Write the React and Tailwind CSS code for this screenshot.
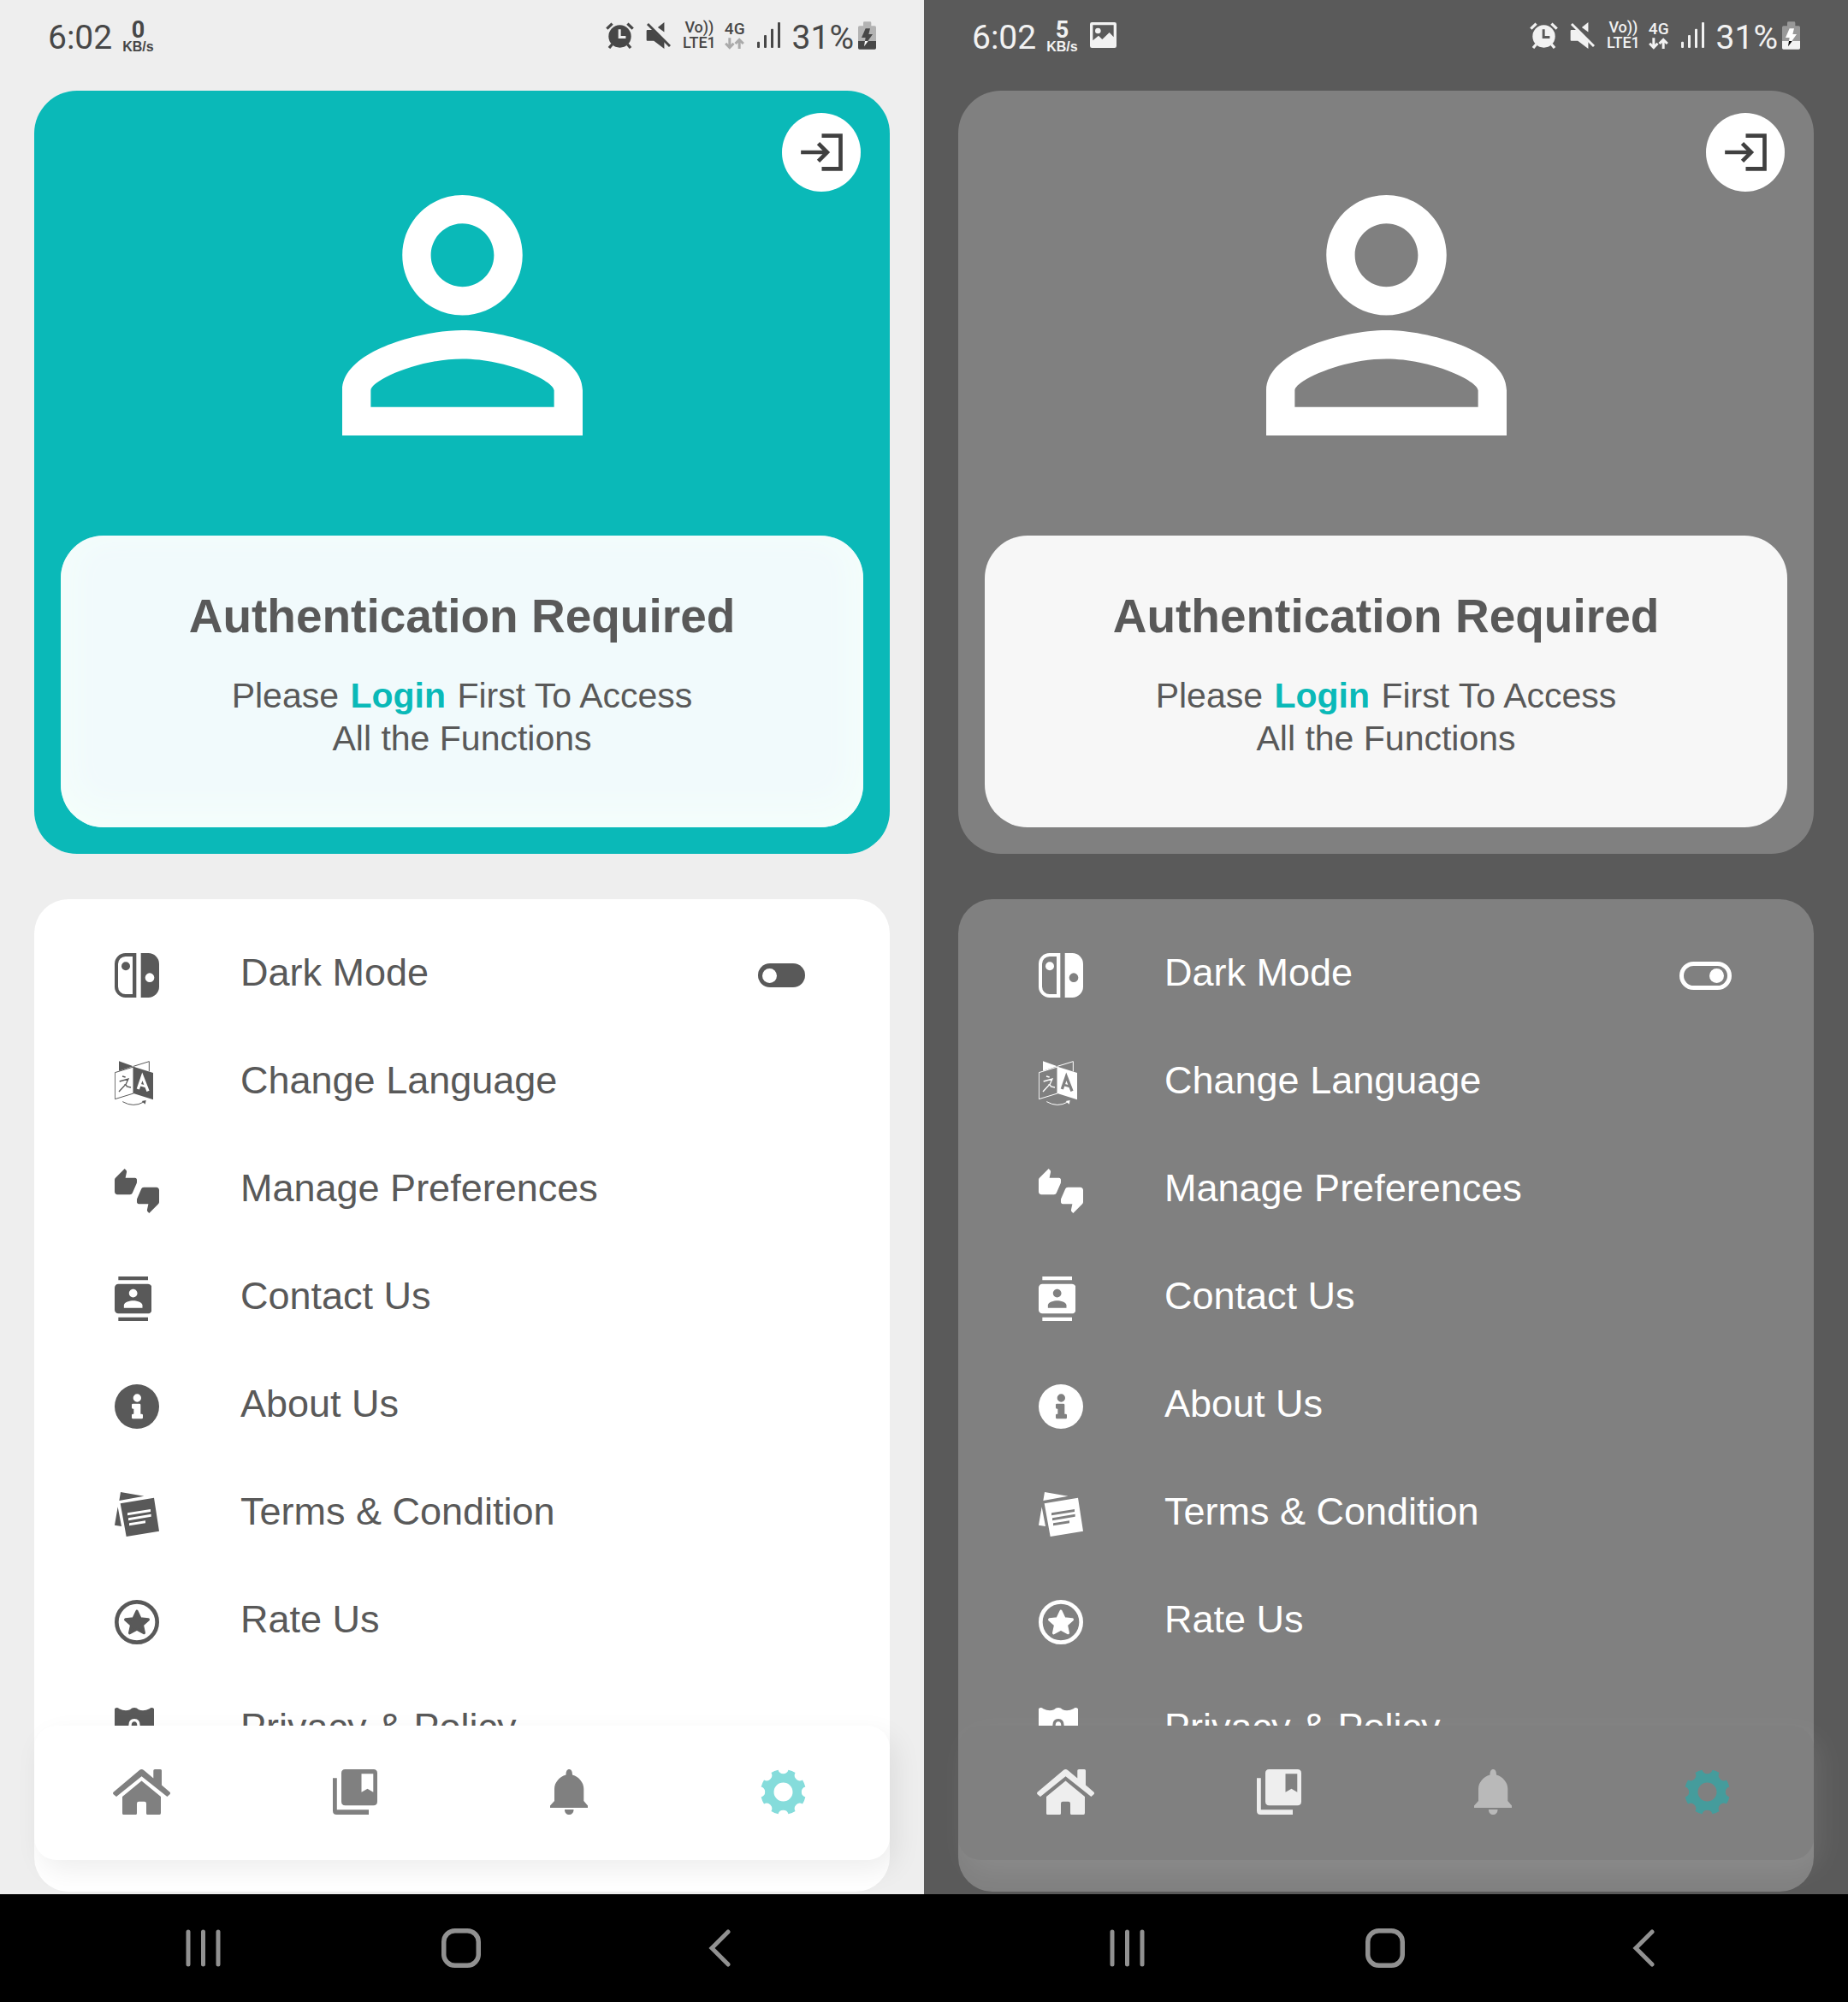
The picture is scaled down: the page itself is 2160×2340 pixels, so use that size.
import React from "react";

const LIGHT = {
  id: "light",
  dark: false,
  speed: "0",
  page: "bg-[#eeeeee]",
  status: "text-[#474747]",
  arrows: "text-[#aaaaaa]",
  page_hex: "#eeeeee",
  batteryBody: "#b3b3b3",
  batteryBolt: "#474747",
  batteryBoltLow: "#ffffff",
  hero: "bg-[#0ab9b8]",
  notice:
    "bg-[#f1fafc] shadow-[inset_0_-12px_36px_12px_#f4fefb]",
  menu: "bg-white text-[#595959]",
  nav: "bg-white shadow-[8px_12px_32px_rgba(0,0,0,0.07)]",
  navIcon: "text-[#808080]",
  bell: "text-[#808080]",
  gear: "text-[#85dcdb]",
};

const DARK = {
  id: "dark",
  dark: true,
  speed: "5",
  page: "bg-[#5a5a5a]",
  status: "text-[#f2f2f2]",
  arrows: "text-[#f2f2f2]",
  page_hex: "#5a5a5a",
  batteryBody: "#989898",
  batteryBolt: "#ffffff",
  batteryBoltLow: "#000000",
  hero: "bg-[#808080]",
  notice: "bg-[#f7f7f7]",
  menu: "bg-[#808080] text-white",
  nav: "bg-[#808080] shadow-[8px_12px_32px_rgba(255,255,255,0.09)]",
  navIcon: "text-[#eeeeee]",
  bell: "text-[#b9b9b9]",
  gear: "text-[#459c9c]",
};

/* ---------- status bar ---------- */

function AlarmIcon({ hand }) {
  return (
    <svg viewBox="0 0 98 94" className="h-[31px] w-[33px]" fill="none" stroke="currentColor" strokeWidth="10">
      <path d="M3 23 22 5M76 5l19 18M22 78 11 91M76 78l11 13" />
      <circle cx="49" cy="50" r="40" fill="currentColor" stroke="none" />
      <path d="M48 25v28h22" stroke={hand} strokeWidth="9" />
    </svg>
  );
}

function MuteIcon() {
  return (
    <svg viewBox="0 0 88 94" className="h-[31px] w-[29px]" fill="currentColor">
      <path d="M5 27h18l42 42v25L28 66H5q-3 0-3-3V30q0-3 3-3ZM65 0v35L42 18Z" />
      <path d="m6 6 79 79" stroke="currentColor" strokeWidth="9" />
    </svg>
  );
}

function DataArrows() {
  return (
    <svg viewBox="0 0 68 42" className="h-[14px] w-[23px]" fill="none" stroke="currentColor" strokeWidth="9">
      <path d="M17 1v32M3 20l14 15 14-15M51 39V7M37 21 51 7l14 14" />
    </svg>
  );
}

function SignalIcon() {
  return (
    <svg viewBox="0 0 81 90" className="h-[30px] w-[27px]" fill="currentColor">
      <rect x="0" y="68" width="9" height="22" rx="3" />
      <rect x="24" y="45" width="9" height="45" rx="3" />
      <rect x="48" y="23" width="9" height="67" rx="3" />
      <rect x="72" y="0" width="9" height="90" rx="3" />
    </svg>
  );
}

function BatteryIcon({ theme }) {
  return (
    <svg viewBox="0 0 63 97" className="h-[33px] w-[21px]">
      <path d="M18 15V4q0-4 4-4h20q4 0 4 4v11h12q5 0 5 5v50H0V20q0-5 5-5Z" fill={theme.batteryBody} />
      <path d="M0 68h63v24q0 5-5 5H5q-5 0-5-5Z" fill="currentColor" />
      <path d="M26 24h16l-5 20h14L34 68H24l2-12H12Z" fill={theme.batteryBolt} />
      <path d="M24 68h11L21 87Z" fill={theme.batteryBoltLow} />
    </svg>
  );
}

function PictureIcon() {
  return (
    <svg viewBox="0 0 93 90" className="h-[30px] w-[31px]" fill="currentColor" fillRule="evenodd">
      <path d="M7 0h79q7 0 7 7v76q0 7-7 7H7q-7 0-7-7V7q0-7 7-7Zm3 10v54l20-17 13 13 25-24 15 16V10Z" />
      <circle cx="28" cy="30" r="10" />
    </svg>
  );
}

function StatusBar({ theme }) {
  return (
    <header className={`flex h-[106px] items-start justify-between px-14 pt-[21px] ${theme.status}`}>
      <div className="flex h-10 items-center">
        <span className="pt-1.5 font-[Roboto,sans-serif] text-[39px] leading-10">6:02</span>
        <div className="ml-3 flex flex-col items-center pt-1 font-bold">
          <span className="font-[Roboto,sans-serif] text-[27px] leading-6">{theme.speed}</span>
          <span className="text-[16px] leading-4">KB/s</span>
        </div>
        {theme.dark && (
          <span className="ml-3.5">
            <PictureIcon />
          </span>
        )}
      </div>
      <div className="flex h-10 items-center font-[Roboto,sans-serif]">
        <AlarmIcon hand={theme.page_hex} />
        <span className="ml-3.5">
          <MuteIcon />
        </span>
        <div className="ml-3.5 flex flex-col items-center text-[18px] font-medium leading-[18px]">
          <span>Vo))</span>
          <span>LTE1</span>
        </div>
        <div className="ml-2.5 flex flex-col items-center text-[19px] font-medium leading-5">
          <span>4G</span>
          <span className={theme.arrows}>
            <DataArrows />
          </span>
        </div>
        <span className="ml-3.5">
          <SignalIcon />
        </span>
        <span className="ml-3.5 mr-[5px] pt-1.5 text-[39px] leading-10">31%</span>
        <BatteryIcon theme={theme} />
      </div>
    </header>
  );
}

/* ---------- hero card ---------- */

function Hero({ theme }) {
  return (
    <section className={`rounded-[50px] px-[31px] pb-[31px] pt-[26px] ${theme.hero}`}>
      <div className="flex justify-end">
        <button
          type="button"
          aria-label="Log in"
          className="mr-[3px] flex size-[92px] items-center justify-center rounded-full bg-white text-[#404040]"
        >
          <svg viewBox="0 0 146 132" className="h-11 w-[49px]" fill="none" stroke="currentColor" strokeWidth="14">
            <path d="M73 8h66v116H73M0 66h92" />
            <path d="m61 35 31 31-31 31" />
          </svg>
        </button>
      </div>
      <svg viewBox="4 4 16 16" className="mx-auto mt-1 size-[281px] text-white" fill="currentColor">
        <path d="M12 5.9c1.16 0 2.1.94 2.1 2.1s-.94 2.1-2.1 2.1S9.9 9.16 9.9 8s.94-2.1 2.1-2.1m0 9c2.97 0 6.1 1.46 6.1 2.1v1.1H5.9V17c0-.64 3.13-2.1 6.1-2.1M12 4C9.79 4 8 5.79 8 8s1.79 4 4 4 4-1.79 4-4-1.79-4-4-4zm0 9c-2.67 0-8 1.34-8 4v3h16v-3c0-2.66-5.33-4-8-4z" />
      </svg>
      <div className={`mt-[117px] rounded-[50px] px-8 pb-[79px] pt-[62px] text-center text-[#595959] ${theme.notice}`}>
        <h1 className="text-[55px] font-bold leading-[64px]">Authentication Required</h1>
        <p className="mt-9 text-[41px] leading-[50px]">
          Please{" "}
          <a href="#login" className="mx-0.5 font-bold text-[#0ab9b8]">
            Login
          </a>{" "}
          First To Access
          <br />
          All the Functions
        </p>
      </div>
    </section>
  );
}

/* ---------- menu icons ---------- */

const ICON = "h-[52px] w-auto";

const SwitchIcon = () => (
  <svg viewBox="0 0 156 156" className={ICON} fill="currentColor" fillRule="evenodd">
    <path d="M38 0h38v156H38A38 38 0 0 1 0 118V38A38 38 0 0 1 38 0Zm0 12a26 26 0 0 0-26 26v80a26 26 0 0 0 26 26h25V12Z" />
    <circle cx="39" cy="46" r="15" />
    <path d="M92 0h26a38 38 0 0 1 38 38v80a38 38 0 0 1-38 38H92Zm31 70a16 16 0 1 0 0 32 16 16 0 0 0 0-32Z" />
  </svg>
);

const LanguageIcon = ({ letter }) => (
  <svg viewBox="0 0 135 156" className={ICON} fill="none" stroke="currentColor" strokeWidth="3">
    <path d="M15 1 65 19 15 35Z" fill="currentColor" stroke="none" />
    <path d="m66 19 55-17v35M1 41l65-20v93L1 134Z" />
    <path d="m66 20 69 22v94l-69-22Z" fill="currentColor" stroke="none" />
    <polyline points="82,99 97,55 117,106" stroke={letter} strokeWidth="10" />
    <polyline points="86,83 110,90" stroke={letter} strokeWidth="8" />
    <path d="m27 54 11 3M17 72l31-9-8 18-25 27M34 84q7-2 9 6l14 3" strokeWidth="4" />
    <path d="M28 143q38 22 74 1" />
    <path d="m95 141 15-3-3 14Z" fill="currentColor" stroke="none" />
  </svg>
);

const ThumbsIcon = () => (
  <svg viewBox="0 0 24 24" className={ICON} fill="currentColor">
    <path d="M12 6c0-.55-.45-1-1-1H5.82l.66-3.18.02-.23c0-.31-.13-.59-.33-.8L5.38 0 .44 4.94C.17 5.21 0 5.59 0 6v6.5c0 .83.67 1.5 1.5 1.5h6.75c.62 0 1.15-.38 1.38-.91l2.26-5.29c.07-.17.11-.36.11-.55V6zm10.5 4h-6.75c-.62 0-1.15.38-1.38.91l-2.26 5.29c-.07.17-.11.36-.11.55V18c0 .55.45 1 1 1h5.18l-.66 3.18-.02.24c0 .31.13.59.33.8l.79.78 4.94-4.94c.27-.27.44-.65.44-1.06v-6.5c0-.83-.67-1.5-1.5-1.5z" />
  </svg>
);

const ContactIcon = () => (
  <svg viewBox="2 0 20 24" className={ICON} fill="currentColor">
    <path d="M20 0H4v2h16V0zM4 24h16v-2H4v2zM20 4H4c-1.1 0-2 .9-2 2v12c0 1.1.9 2 2 2h16c1.1 0 2-.9 2-2V6c0-1.1-.9-2-2-2zm-8 2.75c1.24 0 2.25 1.01 2.25 2.25s-1.01 2.25-2.25 2.25S9.75 10.24 9.75 9 10.76 6.75 12 6.75zM17 17H7v-1.5c0-1.67 3.33-2.5 5-2.5s5 .83 5 2.5V17z" />
  </svg>
);

const InfoIcon = () => (
  <svg viewBox="0 0 156 156" className={ICON} fill="currentColor" fillRule="evenodd">
    <path d="M78 0a78 78 0 1 0 0 156A78 78 0 0 0 78 0Zm1 34a14 14 0 1 1 0 28 14 14 0 0 1 0-28ZM64 68h23q4 0 4 4v32h4q4 0 4 4v9q0 4-4 4H64q-4 0-4-4v-9q0-4 4-4h3V86h-3q-4 0-4-4V72q0-4 4-4Z" />
  </svg>
);

const NotesIcon = () => (
  <svg viewBox="0 0 156 156" className={ICON} fill="currentColor" fillRule="evenodd">
    <path d="m21 0 82 14-87 16ZM11 52l13 68-24-4Z" />
    <path d="m20 40 118-20 18 117-115 19Zm25 33v9l81-13v-9Zm3 18v9l80-14v-9Zm3 18v9l57-9v-9Z" />
  </svg>
);

const StarIcon = () => (
  <svg viewBox="0 0 156 156" className={ICON} fill="none" stroke="currentColor">
    <circle cx="78" cy="78" r="71" strokeWidth="14" />
    <path
      d="m78 40 12 26 28 3-21 19 6 28-25-14-25 14 6-28-21-19 28-3Z"
      fill="currentColor"
      strokeWidth="10"
      strokeLinejoin="round"
    />
  </svg>
);

const ShieldIcon = () => (
  <svg viewBox="0 0 138 156" className={ICON} fill="currentColor" fillRule="evenodd">
    <path d="M0 4Q8-4 16 4q20 10 38 3 6-7 15-7t15 7q18 7 38-3 8-8 16 0v80q0 46-69 72Q0 130 0 84Zm69 35q-20 0-20 23v12h-6v38h52V74h-6V62q0-23-20-23Zm0 10q10 0 10 14v11H59V63q0-14 10-14Z" />
  </svg>
);

const LINKS = [
  { label: "Change Language", Icon: LanguageIcon },
  { label: "Manage Preferences", Icon: ThumbsIcon },
  { label: "Contact Us", Icon: ContactIcon },
  { label: "About Us", Icon: InfoIcon },
  { label: "Terms & Condition", Icon: NotesIcon },
  { label: "Rate Us", Icon: StarIcon },
  { label: "Privacy & Policy", Icon: ShieldIcon },
];

const ROW = "flex h-[126px] items-center pl-[94px] pr-24";
const ROW_ICON = "w-[147px] shrink-0";
const ROW_LABEL = "pb-1.5 text-[45px] leading-[52px]";

function Menu({ theme }) {
  const switchId = `${theme.id}-mode`;
  return (
    <ul className={`rounded-[40px] pb-[126px] pt-[26px] ${theme.menu}`}>
      <li className={ROW}>
        <span className={ROW_ICON}>
          <SwitchIcon />
        </span>
        <label htmlFor={switchId} className={ROW_LABEL}>
          Dark Mode
        </label>
        <span className="ml-auto flex w-[61px] justify-center">
          <input
            id={switchId}
            type="checkbox"
            role="switch"
            defaultChecked={theme.dark}
            className="flex h-7 w-[55px] appearance-none items-center rounded-full bg-[#595959] px-[5px] before:size-[17px] before:rounded-full before:bg-white before:content-[''] checked:h-[33px] checked:w-[61px] checked:justify-end checked:border-[5px] checked:border-white checked:bg-transparent checked:px-1"
          />
        </span>
      </li>
      {LINKS.map(({ label, Icon }) => (
        <li key={label}>
          <a href="#menu" className={ROW}>
            <span className={ROW_ICON}>
              <Icon letter={theme.dark ? "#808080" : "#ffffff"} />
            </span>
            <span className={ROW_LABEL}>{label}</span>
          </a>
        </li>
      ))}
    </ul>
  );
}

/* ---------- bottom navigation ---------- */

const polar = (angle, radius) => {
  const a = (angle * Math.PI) / 180;
  return `${(26.5 + radius * Math.cos(a)).toFixed(2)} ${(26.5 + radius * Math.sin(a)).toFixed(2)}`;
};

const GEAR_PATH =
  Array.from({ length: 8 }, (_, i) => {
    const a = i * 45;
    return `${i ? "" : `M${polar(13, 26.5)}`}A26.5 26.5 0 0 1 ${polar(a + 32, 26.5)}A6.2 6.2 0 0 0 ${polar(a + 58, 26.5)}`;
  }).join("") + "ZM26.5 15.5a11 11 0 1 0 0 22 11 11 0 0 0 0-22Z";

const HomeIcon = () => (
  <svg viewBox="0 0 67 53" className="h-[53px] w-[67px]" fill="currentColor">
    <path d="M31 1q2.500-2 5 0l11.300 9.500v-9Q47.300 0 49 0h6.500Q57 0 57 1.500v17l9.300 8q1.500 1.300.2 2.700L63.400 32 33.500 8.200 4 32 .6 29.200q-1.300-1.400.2-2.700Z" />
    <path d="M33.500 13.500 56 32v19q0 2-1.500 2h-14q-1.500 0-1.500-1.500V40q0-2.300-2.300-2.300h-6.400Q28 37.700 28 40v11.500q0 1.500-1.500 1.500h-14Q11 53 11 51.500V32Z" />
  </svg>
);

const LibraryIcon = () => (
  <svg viewBox="0 0 52 53" className="h-[53px] w-[52px]" fill="currentColor" fillRule="evenodd">
    <path d="M14.500 0h33Q52 0 52 4.500v33q0 4.800-4.500 4.800h-33Q10 42.300 10 37.500v-33Q10 0 14.500 0Zm19 5.300v21.400l7-4 6.800 4V5.300Z" />
    <path d="M0 10.300h4.800v37H42V53H4.500Q0 53 0 48.500Z" />
  </svg>
);

const BellIcon = () => (
  <svg viewBox="0 0 44 53" className="h-[53px] w-11" fill="currentColor">
    <path d="M22.200 0C24.500 0 26 2 26 6.500 34 9 39.300 15.500 39.300 23v14l4.700 5.500V45H0v-2.500L5 37V23C5 15.500 10.500 9 18.500 6.500 18.500 2 20 0 22.200 0ZM17 47h10.500c0 4-2.500 6-5.300 6S17 51 17 47Z" />
  </svg>
);

const GearIcon = () => (
  <svg viewBox="0 0 53 53" className="size-[53px]" fill="currentColor" fillRule="evenodd">
    <path d={GEAR_PATH} />
  </svg>
);

function BottomNav({ theme }) {
  const items = [
    { label: "Home", Icon: HomeIcon, tone: theme.navIcon },
    { label: "Library", Icon: LibraryIcon, tone: theme.navIcon },
    { label: "Notifications", Icon: BellIcon, tone: theme.bell },
    { label: "Settings", Icon: GearIcon, tone: theme.gear },
  ];
  return (
    <nav className={`absolute inset-x-0 bottom-[37px] grid h-[157px] grid-cols-4 rounded-[26px] pb-0.5 ${theme.nav}`}>
      {items.map(({ label, Icon, tone }) => (
        <button key={label} type="button" aria-label={label} className={`flex items-center justify-center ${tone}`}>
          <Icon />
        </button>
      ))}
    </nav>
  );
}

function SystemBar() {
  return (
    <footer className="relative grid h-[126px] grid-cols-3 bg-black pl-[86px] pr-[88px] text-[#919191]">
      <button type="button" aria-label="Recent apps" className="flex items-center justify-center">
        <svg viewBox="0 0 41 44" className="h-11 w-[41px]" stroke="currentColor" strokeWidth="5" strokeLinecap="round">
          <path d="M3 3v38M20.500 3v38M38 3v38" />
        </svg>
      </button>
      <button type="button" aria-label="Home screen" className="flex items-center justify-center">
        <svg viewBox="0 0 46 46" className="size-[46px]" fill="none" stroke="currentColor" strokeWidth="5.500">
          <rect x="2.750" y="2.750" width="40.500" height="40.500" rx="13" />
        </svg>
      </button>
      <button type="button" aria-label="Back" className="flex items-center justify-center">
        <svg viewBox="0 0 26 44" className="h-11 w-[26px]" fill="none" stroke="currentColor" strokeWidth="5" strokeLinecap="round">
          <path d="M23 3 4 22l19 19" />
        </svg>
      </button>
    </footer>
  );
}

function Phone({ theme }) {
  return (
    <div className={`flex flex-col overflow-hidden ${theme.page}`}>
      <StatusBar theme={theme} />
      <main className="flex flex-1 flex-col px-10 pb-[3px]">
        <Hero theme={theme} />
        <div className="relative mt-[53px]">
          <Menu theme={theme} />
          <BottomNav theme={theme} />
        </div>
      </main>
      <SystemBar />
    </div>
  );
}

export default function App() {
  return (
    <div className="grid grid-cols-2 font-['Liberation_Sans',Arial,sans-serif]">
      <Phone theme={LIGHT} />
      <Phone theme={DARK} />
    </div>
  );
}
